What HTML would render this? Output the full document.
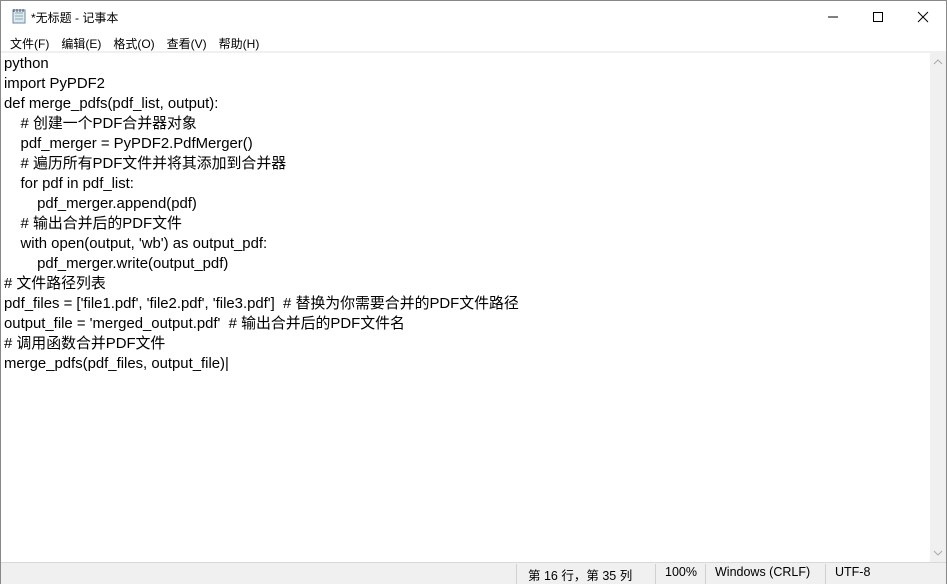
<!DOCTYPE html>
<html><head><meta charset="utf-8"><style>
body{margin:0;width:947px;height:584px;overflow:hidden;background:#fff;font-family:"Liberation Sans","Noto Sans CJK SC",sans-serif;position:relative;}
.win{position:absolute;left:0;top:0;width:945px;height:582px;border:1px solid #888;background:#fff;}
.title{position:absolute;left:30px;top:8px;font-size:12px;color:#000;}
.menu{position:absolute;top:34px;left:9px;font-size:12px;}
.menu span{margin-right:12px;}
.sep{position:absolute;left:0;top:50px;width:945px;height:2px;background:#f0f0f0;}
.text{position:absolute;left:3px;top:53px;font-size:14.9px;line-height:20px;color:#000;white-space:pre;}
.sb{position:absolute;left:929px;top:52px;width:16px;height:509px;background:#f0f0f0;}
.status{position:absolute;left:0;top:561px;width:945px;height:21px;background:#f0f0f0;border-top:1px solid #d8d8d8;font-size:12.5px;}
.status div{position:absolute;top:2px;}
.status i{position:absolute;top:1px;width:1px;height:20px;background:#d0d0d0;}
</style></head><body>
<div class="win">
<svg style="position:absolute;left:10px;top:7px" width="16" height="16"><rect x="2" y="2" width="12" height="13" fill="#dfe9f2" stroke="#6a8aa8"/><path d="M4 5h8M4 8h8M4 11h8" stroke="#8aa" /><path d="M3 1v3M6 1v3M9 1v3M12 1v3" stroke="#556"/></svg>
<div class="title">*无标题 - 记事本</div>
<svg style="position:absolute;left:825px;top:9px" width="110" height="14"><path d="M2 7h10" stroke="#000"/><rect x="47.5" y="2.5" width="9" height="9" fill="none" stroke="#000"/><path d="M92 2l10 10M102 2l-10 10" stroke="#000"/></svg>
<div class="menu"><span>文件(F)</span><span>编辑(E)</span><span>格式(O)</span><span>查看(V)</span><span>帮助(H)</span></div>
<div class="sep"></div>
<div class="text">python
import PyPDF2
def merge_pdfs(pdf_list, output):
    # 创建一个PDF合并器对象
    pdf_merger = PyPDF2.PdfMerger()
    # 遍历所有PDF文件并将其添加到合并器
    for pdf in pdf_list:
        pdf_merger.append(pdf)
    # 输出合并后的PDF文件
    with open(output, 'wb') as output_pdf:
        pdf_merger.write(output_pdf)
# 文件路径列表
pdf_files = ['file1.pdf', 'file2.pdf', 'file3.pdf']  # 替换为你需要合并的PDF文件路径
output_file = 'merged_output.pdf'  # 输出合并后的PDF文件名
# 调用函数合并PDF文件
merge_pdfs(pdf_files, output_file)|</div>
<div class="sb"><svg style="position:absolute;left:3px;top:6px" width="10" height="6"><path d="M1 5l4-4 4 4" stroke="#aaa" fill="none"/></svg><svg style="position:absolute;left:3px;top:497px" width="10" height="6"><path d="M1 1l4 4 4-4" stroke="#aaa" fill="none"/></svg></div>
<div class="status"><i style="left:515px"></i><div style="left:527px">第 16 行，第 35 列</div><i style="left:654px"></i><div style="left:664px">100%</div><i style="left:704px"></i><div style="left:714px">Windows (CRLF)</div><i style="left:824px"></i><div style="left:834px">UTF-8</div></div>
</div>
</body></html>
